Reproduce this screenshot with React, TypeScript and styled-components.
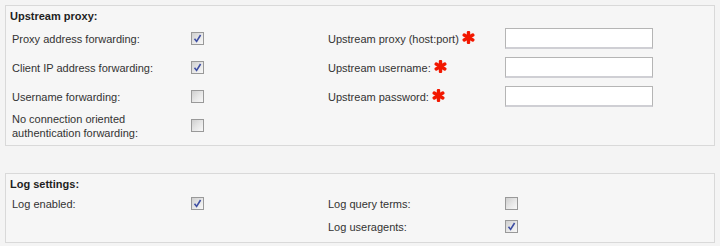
import React from 'react';
import styled, { createGlobalStyle } from 'styled-components';

const GlobalStyle = createGlobalStyle`
  html, body {
    margin: 0;
    padding: 0;
    background: #f4f4f4;
  }
  body {
    font-family: "Liberation Sans", Arial, sans-serif;
    font-size: 11px;
    color: #333;
  }
`;

const Page = styled.div`
  padding: 5px 6px 0 5px;
  width: 710px;
  display: flex;
  flex-direction: column;
  gap: 27px;
`;

const Panel = styled.section<{ $bottom?: number }>`
  border: 1px solid #d9d9d9;
  background: #f6f6f6;
  padding: 0 0 ${p => p.$bottom ?? 4}px 0;
`;

const Title = styled.h3`
  margin: 0;
  padding: 0 0 0 4px;
  height: 18px;
  line-height: 20px;
  font-size: 11px;
  font-weight: bold;
  color: #1e1e1e;
`;

// label | checkbox | label | input
const Grid = styled.div<{ $rowHeight: number }>`
  display: grid;
  grid-template-columns: 179px 137px 177px 148px;
  grid-auto-rows: ${p => p.$rowHeight}px;
  padding-left: 6px;
  align-items: center;
`;

const Label = styled.div`
  line-height: 14px;
  color: #333;
  display: flex;
  align-items: center;
`;

const Cell = styled.div`
  display: flex;
  align-items: center;
`;

const Box = styled.span`
  width: 11px;
  height: 11px;
  border: 1px solid #999;
  background: linear-gradient(135deg, #cfcfcf 0%, #e8e8e8 55%, #f8f8f8 100%);
  display: inline-flex;
  align-items: center;
  justify-content: center;
`;

const TextInput = styled.input`
  box-sizing: border-box;
  width: 148px;
  height: 21px;
  margin: 0;
  background: #fff;
  border: 1px solid #b5b5b5;
  border-bottom: 2px solid #cfcfd4;
  padding: 1px 3px;
  font-family: inherit;
  font-size: 11px;
  outline: none;
`;

const Star = styled.svg`
  margin-left: 3px;
  margin-top: -3px;
`;

const Checkbox: React.FC<{ checked?: boolean }> = ({ checked }) => (
  <Box>
    {checked && (
      <svg width="9" height="9" viewBox="0 0 9 9">
        <path d="M1.5 4.8 L3.6 7.4 L7.6 1" fill="none" stroke="#3f4fa3" strokeWidth="1.6" />
      </svg>
    )}
  </Box>
);

const Required = () => (
  <Star width="13" height="13" viewBox="0 0 13 13">
    <g stroke="#f21800" strokeWidth="3.4" strokeLinecap="round">
      <line x1="6.5" y1="1.5" x2="6.5" y2="11.5" />
      <line x1="2.2" y1="4" x2="10.8" y2="9" />
      <line x1="2.2" y1="9" x2="10.8" y2="4" />
    </g>
  </Star>
);

export default function App() {
  return (
    <>
      <GlobalStyle />
      <Page>
        <Panel $bottom={5}>
          <Title>Upstream proxy:</Title>
          <Grid $rowHeight={29}>
            <Label>Proxy address forwarding:</Label>
            <Cell><Checkbox checked /></Cell>
            <Label>Upstream proxy (host:port)<Required /></Label>
            <Cell><TextInput type="text" /></Cell>

            <Label>Client IP address forwarding:</Label>
            <Cell><Checkbox checked /></Cell>
            <Label>Upstream username:<Required /></Label>
            <Cell><TextInput type="text" /></Cell>

            <Label>Username forwarding:</Label>
            <Cell><Checkbox /></Cell>
            <Label>Upstream password:<Required /></Label>
            <Cell><TextInput type="password" /></Cell>

            <Label>No connection oriented<br />authentication forwarding:</Label>
            <Cell><Checkbox /></Cell>
          </Grid>
        </Panel>

        <Panel>
          <Title>Log settings:</Title>
          <Grid $rowHeight={23}>
            <Label>Log enabled:</Label>
            <Cell><Checkbox checked /></Cell>
            <Label>Log query terms:</Label>
            <Cell><Checkbox /></Cell>

            <div />
            <div />
            <Label>Log useragents:</Label>
            <Cell><Checkbox checked /></Cell>
          </Grid>
        </Panel>
      </Page>
    </>
  );
}
